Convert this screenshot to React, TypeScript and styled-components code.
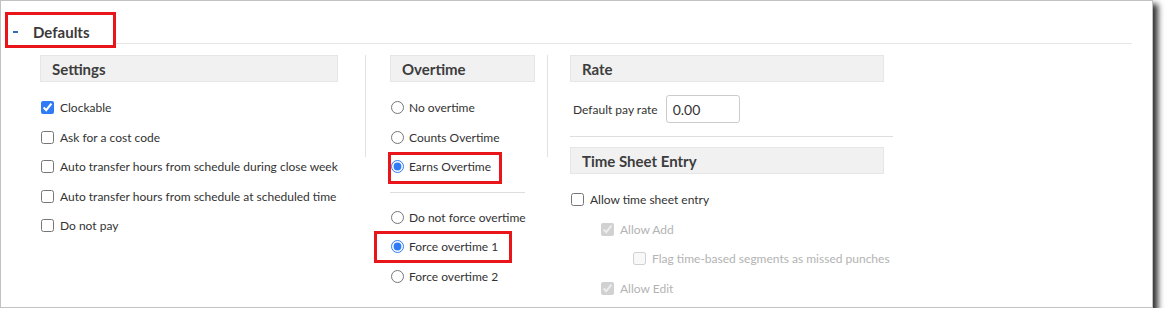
import styled, { createGlobalStyle } from 'styled-components';

const GlobalStyle = createGlobalStyle`
  body {
    margin: 0;
    background: #ffffff;
    font-family: Lato, 'Open Sans', sans-serif;
    color: #333333;
  }
`;

interface CheckItem {
  label: string;
  checked?: boolean;
  disabled?: boolean;
  indent?: number;
}

const settings: CheckItem[] = [
  { label: 'Clockable', checked: true },
  { label: 'Ask for a cost code' },
  { label: 'Auto transfer hours from schedule during close week' },
  { label: 'Auto transfer hours from schedule at scheduled time' },
  { label: 'Do not pay' },
];

const timeSheet: CheckItem[] = [
  { label: 'Allow time sheet entry' },
  { label: 'Allow Add', checked: true, disabled: true, indent: 30 },
  { label: 'Flag time-based segments as missed punches', disabled: true, indent: 62 },
  { label: 'Allow Edit', checked: true, disabled: true, indent: 30 },
];

export default function App() {
  return (
    <>
      <GlobalStyle />
      <Frame>
        <SectionHeader>
          <Title>
            <Minus />
            Defaults
          </Title>
          <HeaderRule />
        </SectionHeader>

        <Columns>
          <SettingsColumn>
            <GroupTitle>Settings</GroupTitle>
            <List>
              {settings.map((item) => (
                <Row key={item.label}>
                  <Check type="checkbox" defaultChecked={item.checked} />
                  <Label>{item.label}</Label>
                </Row>
              ))}
            </List>
          </SettingsColumn>

          <Divider $left={27} $right={24} />

          <OvertimeColumn>
            <GroupTitle>Overtime</GroupTitle>
            <List>
              <Row>
                <Radio type="radio" name="earn" />
                <Label>No overtime</Label>
              </Row>
              <Row>
                <Radio type="radio" name="earn" />
                <Label>Counts Overtime</Label>
              </Row>
              <Row>
                <Radio type="radio" name="earn" defaultChecked />
                <Label>Earns Overtime</Label>
                <Highlight $left={-2} $top={0} $width={114} $height={32} />
              </Row>
            </List>
            <Separator $width={135} $top={10} $bottom={0} />
            <List $top={10}>
              <Row>
                <Radio type="radio" name="force" />
                <Label>Do not force overtime</Label>
              </Row>
              <Row>
                <Radio type="radio" name="force" defaultChecked />
                <Label>Force overtime 1</Label>
                <Highlight $left={-16} $top={-1} $width={138} $height={32} />
              </Row>
              <Row>
                <Radio type="radio" name="force" />
                <Label>Force overtime 2</Label>
              </Row>
            </List>
          </OvertimeColumn>

          <Divider $left={27} $right={21} />

          <RateColumn>
            <GroupTitle>Rate</GroupTitle>
            <RateRow>
              <SmallLabel>Default pay rate</SmallLabel>
              <RateInput defaultValue="0.00" />
            </RateRow>
            <Separator $width={323} $top={13} $bottom={10} />
            <GroupTitle>Time Sheet Entry</GroupTitle>
            <List>
              {timeSheet.map((item) => (
                <Row key={item.label} $indent={item.indent}>
                  <Check
                    type="checkbox"
                    defaultChecked={item.checked}
                    disabled={item.disabled}
                  />
                  <Label $muted={item.disabled}>{item.label}</Label>
                </Row>
              ))}
            </List>
          </RateColumn>
        </Columns>
      </Frame>
    </>
  );
}

// Styles
const Frame = styled.div`
  box-sizing: border-box;
  width: 1153px;
  height: 308px;
  padding-top: 11px;
  background: #ffffff;
  border: 1px solid #c2c2c2;
  box-shadow: 4px 5px 6px 1px rgba(0, 0, 0, 0.8);
  overflow: hidden;
`;

const SectionHeader = styled.div`
  display: flex;
  align-items: flex-end;
  padding-left: 4px;
  padding-right: 20px;
`;

const Title = styled.div`
  box-sizing: border-box;
  display: flex;
  align-items: center;
  width: 111px;
  height: 36px;
  padding: 3px 0 0 5px;
  border: 3px solid #e8151b;
  font-size: 15px;
  font-weight: 700;
  color: #3a3a3a;
`;

const Minus = styled.span`
  display: inline-block;
  width: 5px;
  height: 2px;
  margin-right: 15px;
  background: #2e6fb5;
`;

const HeaderRule = styled.div`
  flex: 1;
  height: 1px;
  margin-bottom: 4px;
  background: #e6e6e6;
`;

const Columns = styled.div`
  display: flex;
  align-items: flex-start;
  padding: 7px 0 0 39px;
`;

const SettingsColumn = styled.div`
  width: 298px;
`;

const OvertimeColumn = styled.div`
  width: 145px;
  margin-right: -15px;
`;

const RateColumn = styled.div`
  width: 323px;
  padding-left: 1px;
`;

const Divider = styled.div<{ $left: number; $right: number }>`
  align-self: flex-start;
  width: 1px;
  height: 102px;
  margin: 0 ${(p) => p.$right}px 0 ${(p) => p.$left}px;
  background: #e2e2e2;
`;

const GroupTitle = styled.div`
  box-sizing: border-box;
  width: 100%;
  max-width: 314px;
  height: 27px;
  padding-left: 11px;
  display: flex;
  align-items: center;
  background: #f1f1f1;
  border: 1px solid #e6e6e6;
  font-size: 15px;
  font-weight: 700;
  color: #3d3d3d;
`;

const List = styled.div<{ $top?: number }>`
  display: flex;
  flex-direction: column;
  padding-top: ${(p) => p.$top ?? 11}px;
`;

const Row = styled.div<{ $indent?: number }>`
  position: relative;
  display: flex;
  align-items: center;
  height: 29.5px;
  padding-left: ${(p) => p.$indent ?? 0}px;
  white-space: nowrap;
`;

const Check = styled.input`
  width: 13px;
  height: 13px;
  margin: 0 6px 0 1px;
  accent-color: #2f7bf5;
`;

const Radio = styled.input`
  width: 13px;
  height: 13px;
  margin: 0 5px 0 1px;
  accent-color: #2f7bf5;
`;

const Label = styled.span<{ $muted?: boolean }>`
  font-size: 12px;
  color: ${(p) => (p.$muted ? '#b3b3b3' : '#333333')};
`;

const Highlight = styled.span<{ $left: number; $top: number; $width: number; $height: number }>`
  position: absolute;
  left: ${(p) => p.$left}px;
  top: ${(p) => p.$top}px;
  width: ${(p) => p.$width}px;
  height: ${(p) => p.$height}px;
  box-sizing: border-box;
  border: 3px solid #e8151b;
  pointer-events: none;
`;

const Separator = styled.div<{ $width: number; $top: number; $bottom: number }>`
  width: ${(p) => p.$width}px;
  height: 1px;
  margin: ${(p) => p.$top}px 0 ${(p) => p.$bottom}px;
  background: #dedede;
`;

const RateRow = styled.div`
  display: flex;
  align-items: center;
  gap: 8px;
  margin-top: 13px;
  padding-left: 3px;
`;

const SmallLabel = styled.span`
  font-size: 12px;
  color: #333333;
`;

const RateInput = styled.input`
  box-sizing: border-box;
  width: 74px;
  height: 28px;
  padding: 0 6px;
  border: 1px solid #cccccc;
  border-radius: 3px;
  font-family: Lato, sans-serif;
  font-size: 14px;
  color: #333333;
  outline: none;
`;
